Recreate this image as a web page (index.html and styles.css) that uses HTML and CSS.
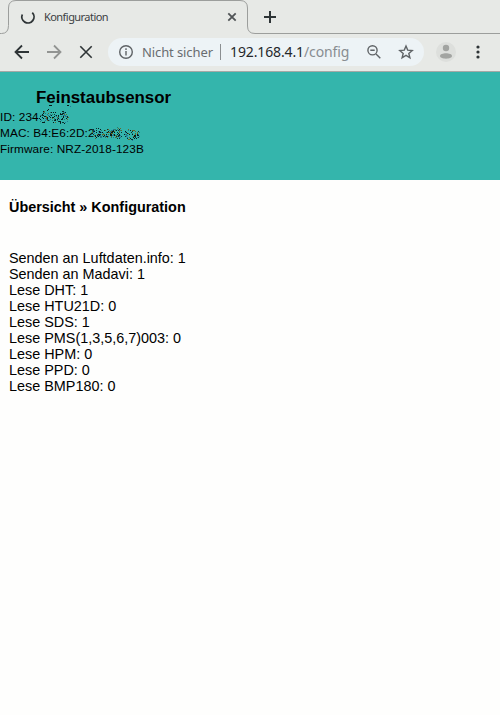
FILE: index.html
```html
<!DOCTYPE html>
<html lang="de">
<head>
<meta charset="utf-8">
<title>Konfiguration</title>
<link rel="stylesheet" href="styles.css">
</head>
<body>
<div class="tabs">
  <svg class="outline" width="500" height="34" viewBox="0 0 500 34"><path d="M0 33.500H1.500Q8.500 33.500 8.500 25.500V8Q8.500 .5 16 .5H240Q247.500 .5 247.500 8V26Q247.500 33.500 255 33.500H500"/></svg>
  <div class="tab">
    <svg class="spinner" width="16" height="16" viewBox="0 0 16 16"><path d="M2.300 5.500A6.100 6.100 0 1 0 12.300 3.600"/></svg>
    <span class="tab-title">Konfiguration</span>
    <svg class="close" width="10" height="10" viewBox="0 0 10 10"><path d="M1.300 1.300L8.700 8.700M8.700 1.300L1.300 8.700"/></svg>
  </div>
  <svg class="plus" width="12" height="12" viewBox="0 0 12 12"><path d="M6 0V12M0 6H12"/></svg>
</div>
<div class="toolbar">
  <svg class="nav" width="16" height="16" viewBox="0 0 16 16"><path d="M15 8H2M8 1.500L1.500 8L8 14.500"/></svg>
  <svg class="nav forward" width="16" height="16" viewBox="0 0 16 16"><path d="M1 8H14M8 1.500L14.500 8L8 14.500"/></svg>
  <svg class="nav stop" width="16" height="16" viewBox="0 0 16 16"><path d="M2.300 2.300L13.700 13.700M13.700 2.300L2.300 13.700"/></svg>
  <div class="address">
    <svg class="info" width="16" height="16" viewBox="0 0 16 16"><circle cx="8" cy="8" r="6.300"/><path d="M8 7V11.500M8 4.300V6"/></svg>
    <span class="insecure">Nicht sicher</span>
    <span class="divider"></span>
    <span class="url">192.168.4.1<span class="path">/config</span></span>
    <svg class="magnifier" width="16" height="16" viewBox="0 0 16 16"><circle cx="6.500" cy="6.300" r="4.600"/><path d="M10 10L14.300 14.200M4.300 6.300H8.700"/></svg>
    <svg class="star" width="16" height="16" viewBox="0 0 16 16"><path d="M8 2L9.700 6.100L14.200 6.500L10.800 9.400L11.900 13.800L8 11.400L4.100 13.800L5.200 9.400L1.800 6.500L6.300 6.100Z"/></svg>
  </div>
  <svg class="avatar" width="20" height="20" viewBox="0 0 20 20"><circle class="disc" cx="10" cy="10" r="10"/><circle cx="10" cy="6" r="3.200"/><path d="M4 14C4 10.200 16 10.200 16 14C16 17.500 4 17.500 4 14Z"/></svg>
  <svg class="menu" width="4" height="14" viewBox="0 0 4 14"><circle cx="2" cy="2" r="1.600"/><circle cx="2" cy="7" r="1.600"/><circle cx="2" cy="12" r="1.600"/></svg>
</div>
<header>
  <h1>Feinstaubsensor</h1>
  <div>ID: 234</div>
  <div>MAC: B4:E6:2D:2</div>
  <div>Firmware: NRZ-2018-123B</div>
  <svg class="spray" width="150" height="50" viewBox="0 0 150 50" shape-rendering="crispEdges"></svg>
</header>
<main>
  <h2>Übersicht » Konfiguration</h2>
  <div>Senden an Luftdaten.info: 1</div>
  <div>Senden an Madavi: 1</div>
  <div>Lese DHT: 1</div>
  <div>Lese HTU21D: 0</div>
  <div>Lese SDS: 1</div>
  <div>Lese PMS(1,3,5,6,7)003: 0</div>
  <div>Lese HPM: 0</div>
  <div>Lese PPD: 0</div>
  <div>Lese BMP180: 0</div>
</main>
<script src="spray.js"></script>
</body>
</html>
```
FILE: styles.css
```css
body { margin: 0; width: 500px; height: 715px; overflow: hidden; background: #fefefd; color: #000; font-family: "Liberation Sans", Arial, sans-serif; }
svg { flex: none; display: block; fill: none; stroke: #2e3436; stroke-width: 1.8; }
.tabs { position: relative; height: 34px; display: flex; align-items: center; background: #e7e9e6; font-family: "Noto Sans", sans-serif; }
.outline { position: absolute; left: 0; top: 0; stroke: #9c9e9c; stroke-width: 1; }
.tab { box-sizing: border-box; width: 240px; margin-left: 8px; padding: 0 11px 0 12px; height: 34px; display: flex; align-items: center; }
.tab-title { margin-left: 8px; padding-bottom: 1px; flex: 1; font-size: 11px; letter-spacing: -.55px; color: #3c4043; }
.close { stroke: #505456; stroke-width: 1.8; }
.plus { margin-left: 16px; stroke-width: 2; }
.toolbar { box-sizing: border-box; height: 38px; display: flex; align-items: center; padding: 0 20px 1px 14px; background: #e7e9e6; border-bottom: 1px solid #a5a8a6; font-family: "Noto Sans", sans-serif; }
.nav + .nav { margin-left: 16px; }
.forward { stroke: #929492; }
.stop { stroke-width: 1.6; }
.address { box-sizing: border-box; width: 316px; height: 28px; margin-left: 14px; padding: 0 10px; border-radius: 14px; background: #edf3f6; display: flex; align-items: center; font-size: 14px; white-space: nowrap; }
.info, .magnifier, .star { stroke: #5f6366; stroke-width: 1.4; }
.insecure { margin-left: 8px; width: 72px; font-size: 13px; letter-spacing: -.1px; color: #696d70; }
.divider { margin-left: 6px; width: 1px; height: 16px; background: #8b8f91; }
.url { margin-left: 9px; width: 136px; padding-bottom: 1px; font-size: 14px; letter-spacing: -.12px; color: #25282b; }
.path { color: #888d91; }
.star { margin-left: 16px; }
.avatar { margin-left: 12px; stroke: none; fill: #a2a4a1; }
.disc { fill: #dddfdc; }
.menu { margin-left: 20px; stroke: none; fill: #2e3436; }
header { position: relative; box-sizing: border-box; height: 108px; padding-top: 16px; background: #34b5ac; font-size: 11.800px; letter-spacing: .1px; line-height: 16px; }
h1 { margin: 0 0 1px 36px; font-size: 16.900px; letter-spacing: 0; line-height: 20px; }
.spray { position: absolute; left: 0; top: 28px; stroke: none; }
main { padding: 19px 9px; font-size: 14.400px; line-height: 16px; }
h2 { margin: 0 0 35px; font-size: 14.400px; line-height: 16px; }
```
FILE: spray.js
```js
const spray = document.querySelector(".spray");
let seed = 17;
const random = () => (seed = (seed * 16807) % 2147483647) / 2147483647;

function dot(x, y, fill, w = 1) {
  const rect = document.createElementNS("http://www.w3.org/2000/svg", "rect");
  const values = { x, y, width: w, height: 1, fill };
  for (const key in values) rect.setAttribute(key, values[key]);
  spray.appendChild(rect);
}

function cloud(cx, cy, rx, ry, count) {
  const colors = ["#071b1b", "#0b3130", "#071b1b", "#287c72", "#247999", "#686b2b"];
  for (let i = 0; i < count; i++) {
    const angle = random() * Math.PI * 2;
    const radius = Math.sqrt(random());
    dot(Math.round(cx + Math.cos(angle) * rx * radius), Math.round(cy + Math.sin(angle) * ry * radius), colors[Math.floor(random() * colors.length)]);
  }
}

cloud(44, 17, 5, 6, 50);
cloud(53, 17, 6, 6, 48);
cloud(62, 17, 6, 6, 58);
cloud(97, 33, 5, 6, 60);
cloud(108, 33, 6, 5, 48);
cloud(116, 33, 6, 6, 65);
cloud(132, 34, 8, 6, 65);
dot(49, 5, "#071b1b", 3);
dot(67, 5, "#071b1b", 2);
dot(70, 6, "#247999");
dot(48, 9, "#071b1b");
dot(47, 10, "#071b1b");
```
